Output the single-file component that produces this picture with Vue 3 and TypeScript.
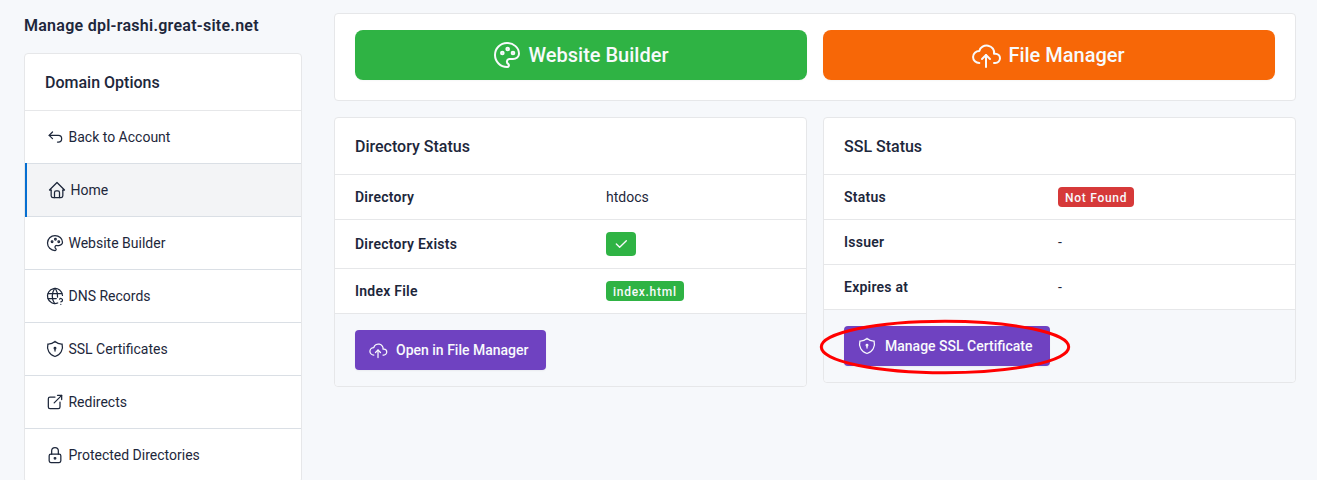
<script setup lang="ts">
interface MenuItem {
  label: string
  icon: string
  active?: boolean
}

const icons: Record<string, string[]> = {
  back: ['M9 14l-4 -4l4 -4', 'M5 10h11a4 4 0 1 1 0 8h-1'],
  home: [
    'M5 12h-2l9 -9l9 9h-2',
    'M5 12v7a2 2 0 0 0 2 2h10a2 2 0 0 0 2 -2v-7',
    'M9 21v-6a2 2 0 0 1 2 -2h2a2 2 0 0 1 2 2v6',
  ],
  palette: [
    'M12 21a9 9 0 0 1 0 -18c4.97 0 9 3.582 9 8c0 1.06 -.474 2.078 -1.318 2.828c-.844 .75 -1.989 1.172 -3.182 1.172h-2.5a2 2 0 0 0 -1 3.75a1.3 1.3 0 0 1 -1 2.25',
    'M7.5 10.5a1 1 0 1 0 2 0a1 1 0 1 0 -2 0',
    'M11.5 7.5a1 1 0 1 0 2 0a1 1 0 1 0 -2 0',
    'M15.5 10.5a1 1 0 1 0 2 0a1 1 0 1 0 -2 0',
  ],
  world: [
    'M20.975 11.33a9 9 0 1 0 -5.717 9.06',
    'M3.6 9h16.8',
    'M3.6 15h9.9',
    'M11.5 3a17 17 0 0 0 0 18',
    'M12.5 3a16.99 16.99 0 0 1 2.529 10.294',
    'M19 22v.01',
    'M19 19a2.003 2.003 0 0 0 .914 -3.782a1.98 1.98 0 0 0 -2.414 .483',
  ],
  shield: [
    'M12 3a12 12 0 0 0 8.5 3a12 12 0 0 1 -8.5 15a12 12 0 0 1 -8.5 -15a12 12 0 0 0 8.5 -3',
    'M11 11a1 1 0 1 0 2 0a1 1 0 1 0 -2 0',
    'M12 12v2.5',
  ],
  external: [
    'M12 6h-6a2 2 0 0 0 -2 2v10a2 2 0 0 0 2 2h10a2 2 0 0 0 2 -2v-6',
    'M11 13l9 -9',
    'M15 4h5v5',
  ],
  lock: [
    'M5 13a2 2 0 0 1 2 -2h10a2 2 0 0 1 2 2v6a2 2 0 0 1 -2 2h-10a2 2 0 0 1 -2 -2v-6z',
    'M11 16a1 1 0 1 0 2 0a1 1 0 0 0 -2 0',
    'M8 11v-4a4 4 0 1 1 8 0v4',
  ],
  cloud: [
    'M7 18a4.6 4.4 0 0 1 0 -9a5 4.5 0 0 1 11 2h1a3.5 3.5 0 0 1 0 7h-1',
    'M9 15l3 -3l3 3',
    'M12 12v9',
  ],
  check: ['M5 12l5 5l10 -10'],
}

const menu: MenuItem[] = [
  { label: 'Back to Account', icon: 'back' },
  { label: 'Home', icon: 'home', active: true },
  { label: 'Website Builder', icon: 'palette' },
  { label: 'DNS Records', icon: 'world' },
  { label: 'SSL Certificates', icon: 'shield' },
  { label: 'Redirects', icon: 'external' },
  { label: 'Protected Directories', icon: 'lock' },
]
</script>

<template>
  <div class="page">
    <aside class="side">
      <h1 class="title">Manage dpl-rashi.great-site.net</h1>
      <nav class="card menu">
        <h2 class="card-header">Domain Options</h2>
        <a v-for="item in menu" :key="item.label" class="menu-item" :class="{ active: item.active }">
          <svg class="icon" viewBox="0 0 24 24"><path v-for="d in icons[item.icon]" :key="d" :d="d" /></svg>
          <span>{{ item.label }}</span>
        </a>
      </nav>
    </aside>

    <main class="main">
      <section class="card actions">
        <button class="big green">
          <svg class="icon" viewBox="0 0 24 24"><path v-for="d in icons.palette" :key="d" :d="d" /></svg>
          <span>Website Builder</span>
        </button>
        <button class="big orange">
          <svg class="icon" viewBox="0 0 24 24"><path v-for="d in icons.cloud" :key="d" :d="d" /></svg>
          <span>File Manager</span>
        </button>
      </section>

      <div class="columns">
        <section class="card directory">
          <h2 class="card-header">Directory Status</h2>
          <dl>
            <div class="row"><dt>Directory</dt><dd>htdocs</dd></div>
            <div class="row tall">
              <dt>Directory Exists</dt>
              <dd>
                <span class="badge green check">
                  <svg class="icon" viewBox="0 0 24 24"><path v-for="d in icons.check" :key="d" :d="d" /></svg>
                </span>
              </dd>
            </div>
            <div class="row"><dt>Index File</dt><dd><span class="badge green">index.html</span></dd></div>
          </dl>
          <footer class="card-footer">
            <button class="btn">
              <svg class="icon" viewBox="0 0 24 24"><path v-for="d in icons.cloud" :key="d" :d="d" /></svg>
              <span>Open in File Manager</span>
            </button>
          </footer>
        </section>

        <section class="card ssl">
          <h2 class="card-header">SSL Status</h2>
          <dl>
            <div class="row"><dt>Status</dt><dd><span class="badge red">Not Found</span></dd></div>
            <div class="row"><dt>Issuer</dt><dd>-</dd></div>
            <div class="row"><dt>Expires at</dt><dd>-</dd></div>
          </dl>
          <footer class="card-footer">
            <button class="btn">
              <svg class="icon" viewBox="0 0 24 24"><path v-for="d in icons.shield" :key="d" :d="d" /></svg>
              <span>Manage SSL Certificate</span>
              <svg class="highlight" viewBox="0 0 252 56">
                <ellipse cx="126" cy="28" rx="123.7" ry="25.7" />
              </svg>
            </button>
          </footer>
        </section>
      </div>
    </main>
  </div>
</template>

<style>
body {
  margin: 0;
  background: #f6f8fb;
}
</style>

<style scoped>
.page {
  box-sizing: border-box;
  display: flex;
  gap: 32px;
  width: 1317px;
  height: 480px;
  padding: 13px 21px 0 24px;
  overflow: hidden;
  background: #f6f8fb;
  color: #1d273b;
  font: 400 14px/20px Roboto, "Liberation Sans", sans-serif;
}
.page * {
  box-sizing: border-box;
}
.side {
  flex: 0 0 278px;
}
.title {
  margin: 0 0 14px;
  font-size: 16px;
  line-height: 26px;
  font-weight: 600;
  letter-spacing: 0.26px;
}
.card {
  background: #fff;
  border: 1px solid #e6e7e9;
  border-radius: 4px;
}
.card-header {
  height: 57px;
  margin: 0;
  padding: 17px 20px 15px;
  border-bottom: 1px solid #e6e7e9;
  font-size: 16px;
  line-height: 24px;
  font-weight: 500;
}
.icon {
  flex: none;
  display: block;
  width: 20px;
  height: 20px;
  fill: none;
  stroke: currentColor;
  stroke-width: 1.5;
  stroke-linecap: round;
  stroke-linejoin: round;
}
.menu-item {
  display: flex;
  align-items: center;
  gap: 3.8px;
  height: 53px;
  padding: 0 19.7px;
  border-bottom: 1px solid #dadfe5;
}
.menu-item.active {
  height: 54px;
  margin-top: -1px;
  border-top: 1px solid #dadfe5;
  background: #f3f4f6;
  position: relative;
  padding-left: 21.7px;
}
.menu-item.active::before {
  content: "";
  position: absolute;
  left: 0;
  top: -1px;
  bottom: -1px;
  width: 2px;
  background: #066fd1;
}
.main {
  flex: 1;
}
.actions {
  display: flex;
  gap: 16px;
  height: 88px;
  padding: 16px 20px;
}
.big {
  flex: 1;
  display: flex;
  align-items: center;
  justify-content: center;
  gap: 6px;
  height: 50px;
  padding: 0 3px 0 0;
  border: 0;
  border-radius: 8px;
  color: #f8fafc;
  font: 500 20px/28px Roboto, "Liberation Sans", sans-serif;
  box-shadow: 0 1px 2px rgba(29, 39, 59, 0.04);
}
.big .icon {
  width: 32px;
  height: 32px;
}
.green {
  background: #2fb344;
}
.orange {
  background: #f76707;
}
.red {
  background: #d63939;
}
.columns {
  display: flex;
  align-items: flex-start;
  gap: 16px;
  margin-top: 16px;
}
.columns .card {
  flex: 1;
}
dl {
  margin: 0;
}
.row {
  display: flex;
  align-items: center;
  height: 45px;
  padding: 0 20px;
  border-bottom: 1px solid #e6e7e9;
}
.row.tall {
  height: 49px;
}
dt {
  width: 251px;
  font-weight: 600;
  letter-spacing: 0.24px;
}
.ssl dt {
  width: 214px;
}
dd {
  margin: 0;
}
.badge {
  display: block;
  height: 20px;
  padding: 0 7px;
  border-radius: 4px;
  color: #f8fafc;
  font-size: 12px;
  line-height: 22px;
  font-weight: 500;
  letter-spacing: 0.72px;
}
.badge.check {
  height: 24px;
  padding: 4px 7px;
}
.badge .icon {
  width: 16px;
  height: 16px;
  stroke-width: 2;
}
.card-footer {
  padding: 16px 20px;
  background: #f6f8fb;
  border-radius: 0 0 4px 4px;
}
.btn {
  position: relative;
  display: flex;
  align-items: center;
  gap: 8px;
  width: 191px;
  height: 40px;
  padding: 0 0 0 13px;
  border: 0;
  border-radius: 4px;
  background: #6f42c1;
  color: #f8fafc;
  font: 500 14px/20px Roboto, "Liberation Sans", sans-serif;
  white-space: nowrap;
  box-shadow: 0 1px 2px rgba(29, 39, 59, 0.06);
}
.ssl .btn {
  width: 206px;
}
.highlight {
  position: absolute;
  left: -25.5px;
  top: -7.5px;
  width: 252px;
  height: 56px;
  fill: none;
  stroke: #f00;
  stroke-width: 3;
}
</style>
